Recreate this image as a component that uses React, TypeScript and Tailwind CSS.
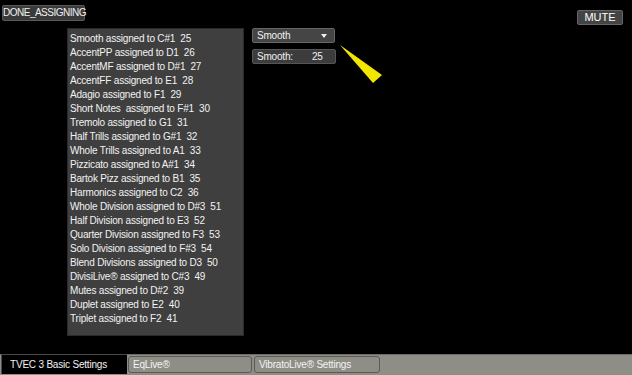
const rows = [
  'Smooth assigned to C#1  25',
  'AccentPP assigned to D1  26',
  'AccentMF assigned to D#1  27',
  'AccentFF assigned to E1  28',
  'Adagio assigned to F1  29',
  'Short Notes  assigned to F#1  30',
  'Tremolo assigned to G1  31',
  'Half Trills assigned to G#1  32',
  'Whole Trills assigned to A1  33',
  'Pizzicato assigned to A#1  34',
  'Bartok Pizz assigned to B1  35',
  'Harmonics assigned to C2  36',
  'Whole Division assigned to D#3  51',
  'Half Division assigned to E3  52',
  'Quarter Division assigned to F3  53',
  'Solo Division assigned to F#3  54',
  'Blend Divisions assigned to D3  50',
  'DivisiLive® assigned to C#3  49',
  'Mutes assigned to D#2  39',
  'Duplet assigned to E2  40',
  'Triplet assigned to F2  41',
]

const font = "font-['Liberation_Sans',Arial,sans-serif]"

export default function App() {
  return (
    <div className={`relative w-[632px] h-[375px] bg-black flex flex-col overflow-hidden text-[10px] tracking-[-0.2px] ${font}`}>
      {/* top bar */}
      <div className="h-[28px] flex justify-between items-start">
        <button className="mt-[5px] ml-[2px] h-[16px] w-[83px] rounded-[2px] bg-[#3a3a3a] border border-[#5a5a5a] text-[#f0f0f0] text-[10px] tracking-[-0.5px] leading-none">
          DONE_ASSIGNING
        </button>
        <button className="mt-[10px] mr-[9px] h-[15px] w-[46px] rounded-[2px] bg-[#444] border border-[#666] text-white text-[11px] tracking-normal leading-none">
          MUTE
        </button>
      </div>

      {/* content */}
      <div className="flex pl-[67px] gap-[8px]">
        <div className="w-[177px] h-[308px] bg-[#3f3f3f] border border-[#2a2a2a] pt-[3px] pl-[2px]">
          {rows.map((r, i) => (
            <div key={i} className="h-[14px] leading-[14px] whitespace-pre text-[#f2f2f2]">
              {r}
            </div>
          ))}
        </div>
        <div className="flex flex-col gap-[6px]">
          <div className="w-[83px] h-[15px] rounded-[2px] bg-[#454545] border border-[#666] flex items-center justify-between px-[4px] text-[#f0f0f0]">
            <span>Smooth</span>
            <span className="w-0 h-0 border-l-[3px] border-r-[3px] border-t-[4px] border-l-transparent border-r-transparent border-t-[#f0f0f0] mr-[3px]" />
          </div>
          <div className="w-[84px] h-[15px] rounded-[2px] bg-[#3c3c3c] border border-[#555] flex items-center px-[4px] text-[#f0f0f0]">
            <span className="w-[55px]">Smooth:</span>
            <span>25</span>
          </div>
        </div>
      </div>

      <div className="flex-1" />

      {/* tabs */}
      <div className="h-[21px] flex bg-[#8e8e86] border-t border-[#6c6c66]">
        <div className="w-[126px] h-full bg-black border-l border-t border-[#4a4a4a] -mt-px ml-[1px] pl-[8px] pt-[2px] text-[#f2f2f2]">
          TVEC 3 Basic Settings
        </div>
        <div className="ml-[1px] mt-[1px] w-[124px] h-[17px] rounded-[3px] border border-[#5b5b56] bg-[#8e8e86] pl-[4px] leading-[15px] text-[#f4f4f4]">
          EqLive®
        </div>
        <div className="ml-[2px] mt-[1px] w-[126px] h-[17px] rounded-[3px] border border-[#5b5b56] bg-[#8e8e86] pl-[4px] leading-[15px] text-[#f4f4f4]">
          VibratoLive® Settings
        </div>
      </div>

      {/* pointer */}
      <svg className="absolute left-0 top-0 pointer-events-none" width="632" height="375">
        <polygon points="340,45 382,75 373,83" fill="#f2e600" />
      </svg>
    </div>
  )
}
